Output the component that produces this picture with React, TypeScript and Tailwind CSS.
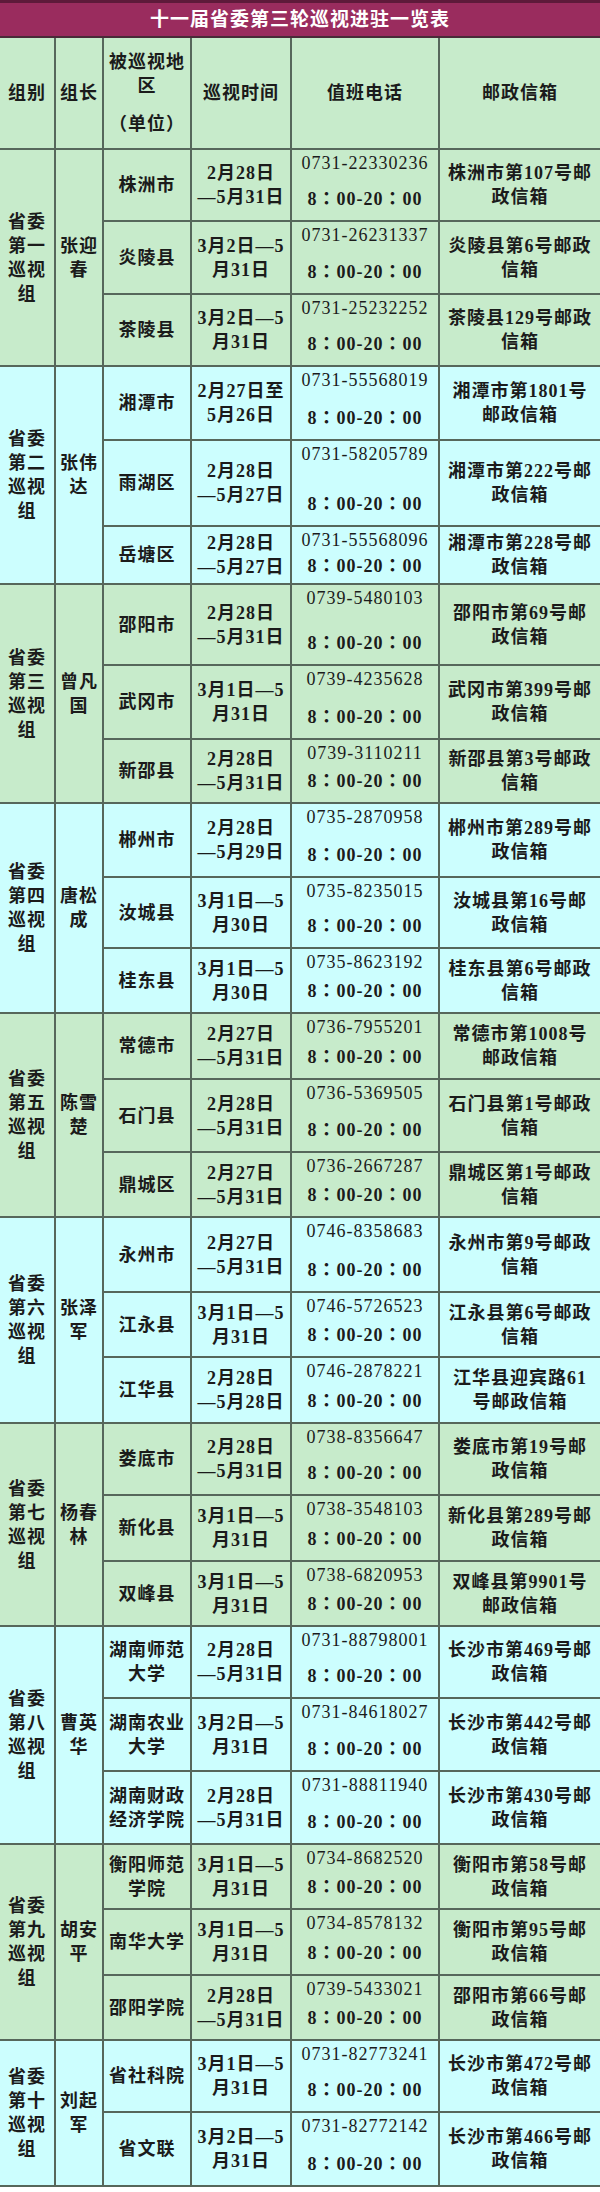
import React from "react";

type Row = { loc: string[]; time: string[]; phone: string; mail: string[]; h: number };
type Group = { label: string[]; leader: string[]; rows: Row[] };

const A = ["2月28日", "—5月31日"];
const B = ["3月2日—5", "月31日"];
const C = ["3月1日—5", "月31日"];
const D = ["2月27日", "—5月31日"];

const groups: Group[] = [
  {
    label: ["省委", "第一", "巡视", "组"],
    leader: ["张迎", "春"],
    rows: [
      { loc: ["株洲市"], time: A, phone: "0731-22330236", mail: ["株洲市第107号邮", "政信箱"], h: 72 },
      { loc: ["炎陵县"], time: B, phone: "0731-26231337", mail: ["炎陵县第6号邮政", "信箱"], h: 73 },
      { loc: ["茶陵县"], time: B, phone: "0731-25232252", mail: ["茶陵县129号邮政", "信箱"], h: 72 },
    ],
  },
  {
    label: ["省委", "第二", "巡视", "组"],
    leader: ["张伟", "达"],
    rows: [
      { loc: ["湘潭市"], time: ["2月27日至", "5月26日"], phone: "0731-55568019", mail: ["湘潭市第1801号", "邮政信箱"], h: 74 },
      { loc: ["雨湖区"], time: ["2月28日", "—5月27日"], phone: "0731-58205789", mail: ["湘潭市第222号邮", "政信箱"], h: 86 },
      { loc: ["岳塘区"], time: ["2月28日", "—5月27日"], phone: "0731-55568096", mail: ["湘潭市第228号邮", "政信箱"], h: 58 },
    ],
  },
  {
    label: ["省委", "第三", "巡视", "组"],
    leader: ["曾凡", "国"],
    rows: [
      { loc: ["邵阳市"], time: A, phone: "0739-5480103", mail: ["邵阳市第69号邮", "政信箱"], h: 81 },
      { loc: ["武冈市"], time: C, phone: "0739-4235628", mail: ["武冈市第399号邮", "政信箱"], h: 74 },
      { loc: ["新邵县"], time: A, phone: "0739-3110211", mail: ["新邵县第3号邮政", "信箱"], h: 64 },
    ],
  },
  {
    label: ["省委", "第四", "巡视", "组"],
    leader: ["唐松", "成"],
    rows: [
      { loc: ["郴州市"], time: ["2月28日", "—5月29日"], phone: "0735-2870958", mail: ["郴州市第289号邮", "政信箱"], h: 74 },
      { loc: ["汝城县"], time: ["3月1日—5", "月30日"], phone: "0735-8235015", mail: ["汝城县第16号邮", "政信箱"], h: 71 },
      { loc: ["桂东县"], time: ["3月1日—5", "月30日"], phone: "0735-8623192", mail: ["桂东县第6号邮政", "信箱"], h: 65 },
    ],
  },
  {
    label: ["省委", "第五", "巡视", "组"],
    leader: ["陈雪", "楚"],
    rows: [
      { loc: ["常德市"], time: D, phone: "0736-7955201", mail: ["常德市第1008号", "邮政信箱"], h: 66 },
      { loc: ["石门县"], time: A, phone: "0736-5369505", mail: ["石门县第1号邮政", "信箱"], h: 73 },
      { loc: ["鼎城区"], time: D, phone: "0736-2667287", mail: ["鼎城区第1号邮政", "信箱"], h: 65 },
    ],
  },
  {
    label: ["省委", "第六", "巡视", "组"],
    leader: ["张泽", "军"],
    rows: [
      { loc: ["永州市"], time: D, phone: "0746-8358683", mail: ["永州市第9号邮政", "信箱"], h: 75 },
      { loc: ["江永县"], time: C, phone: "0746-5726523", mail: ["江永县第6号邮政", "信箱"], h: 65 },
      { loc: ["江华县"], time: ["2月28日", "—5月28日"], phone: "0746-2878221", mail: ["江华县迎宾路61", "号邮政信箱"], h: 66 },
    ],
  },
  {
    label: ["省委", "第七", "巡视", "组"],
    leader: ["杨春", "林"],
    rows: [
      { loc: ["娄底市"], time: A, phone: "0738-8356647", mail: ["娄底市第19号邮", "政信箱"], h: 72 },
      { loc: ["新化县"], time: C, phone: "0738-3548103", mail: ["新化县第289号邮", "政信箱"], h: 66 },
      { loc: ["双峰县"], time: C, phone: "0738-6820953", mail: ["双峰县第9901号", "邮政信箱"], h: 65 },
    ],
  },
  {
    label: ["省委", "第八", "巡视", "组"],
    leader: ["曹英", "华"],
    rows: [
      { loc: ["湖南师范", "大学"], time: A, phone: "0731-88798001", mail: ["长沙市第469号邮", "政信箱"], h: 72 },
      { loc: ["湖南农业", "大学"], time: B, phone: "0731-84618027", mail: ["长沙市第442号邮", "政信箱"], h: 73 },
      { loc: ["湖南财政", "经济学院"], time: A, phone: "0731-88811940", mail: ["长沙市第430号邮", "政信箱"], h: 73 },
    ],
  },
  {
    label: ["省委", "第九", "巡视", "组"],
    leader: ["胡安", "平"],
    rows: [
      { loc: ["衡阳师范", "学院"], time: C, phone: "0734-8682520", mail: ["衡阳市第58号邮", "政信箱"], h: 65 },
      { loc: ["南华大学"], time: C, phone: "0734-8578132", mail: ["衡阳市第95号邮", "政信箱"], h: 66 },
      { loc: ["邵阳学院"], time: A, phone: "0739-5433021", mail: ["邵阳市第66号邮", "政信箱"], h: 65 },
    ],
  },
  {
    label: ["省委", "第十", "巡视", "组"],
    leader: ["刘起", "军"],
    rows: [
      { loc: ["省社科院"], time: C, phone: "0731-82773241", mail: ["长沙市第472号邮", "政信箱"], h: 72 },
      { loc: ["省文联"], time: B, phone: "0731-82772142", mail: ["长沙市第466号邮", "政信箱"], h: 74 },
    ],
  },
];

function Lines({ lines }: { lines: string[] }) {
  return (
    <div className="flex flex-col items-center">
      {lines.map((l, i) => (
        <div key={i} className="whitespace-nowrap">
          {l}
        </div>
      ))}
    </div>
  );
}

function Colon() {
  return <span className="font-['Noto_Sans_CJK_TC',sans-serif]">：</span>;
}

function Hours() {
  return (
    <div className="whitespace-nowrap">
      8<Colon />00-20<Colon />00
    </div>
  );
}

export default function App() {
  return (
    <div className="w-[600px] bg-white font-['Liberation_Serif','Noto_Sans_CJK_SC',serif] text-[18px] leading-[24px] tracking-[1px] text-[#1b1b1b] font-semibold">
      {/* Title */}
      <div className="h-[38px] bg-[#9a2c5e] border-t-[3px] border-t-[#5e1a3a] border-b-2 border-b-[#4a2a38] flex items-center justify-center text-white text-[19px] font-semibold">
        十一届省委第三轮巡视进驻一览表
      </div>

      {/* Header */}
      <div className="flex h-[112px] bg-[#c7ebcb] border-b-2 border-[#56675b]">
        <div className="w-[56px] border-r-2 border-[#56675b] flex items-center justify-center">组别</div>
        <div className="w-[48px] border-r-2 border-[#56675b] flex items-center justify-center">组长</div>
        <div className="w-[88px] border-r-2 border-[#56675b] flex flex-col items-center justify-center">
          <div>被巡视地</div>
          <div>区</div>
          <div className="mt-[14px]">（单位）</div>
        </div>
        <div className="w-[100px] border-r-2 border-[#56675b] flex items-center justify-center">巡视时间</div>
        <div className="w-[148px] border-r-2 border-[#56675b] flex items-center justify-center">值班电话</div>
        <div className="flex-1 flex items-center justify-center">邮政信箱</div>
      </div>

      {groups.map((g, gi) => {
        const bg = gi % 2 === 0 ? "bg-[#c7ebcb]" : "bg-[#ccfefe]";
        return (
          <div key={gi} className={"flex " + bg}>
            <div className="w-[56px] border-r-2 border-b-2 border-[#56675b] flex items-center justify-center">
              <Lines lines={g.label} />
            </div>
            <div className="w-[48px] border-r-2 border-b-2 border-[#56675b] flex items-center justify-center">
              <Lines lines={g.leader} />
            </div>
            <div className="flex-1 flex flex-col">
              {g.rows.map((r, ri) => (
                <div key={ri} className="flex border-b-2 border-[#56675b]" style={{ height: r.h }}>
                  <div className="w-[88px] border-r-2 border-[#56675b] flex items-center justify-center">
                    <Lines lines={r.loc} />
                  </div>
                  <div className="w-[100px] border-r-2 border-[#56675b] flex items-center justify-center">
                    <Lines lines={r.time} />
                  </div>
                  <div className="w-[148px] border-r-2 border-[#56675b] flex flex-col items-center justify-between pt-[1px] pb-[9px]">
                    <div className="font-normal whitespace-nowrap">{r.phone}</div>
                    <Hours />
                  </div>
                  <div className="flex-1 flex items-center justify-center">
                    <Lines lines={r.mail} />
                  </div>
                </div>
              ))}
            </div>
          </div>
        );
      })}
    </div>
  );
}
